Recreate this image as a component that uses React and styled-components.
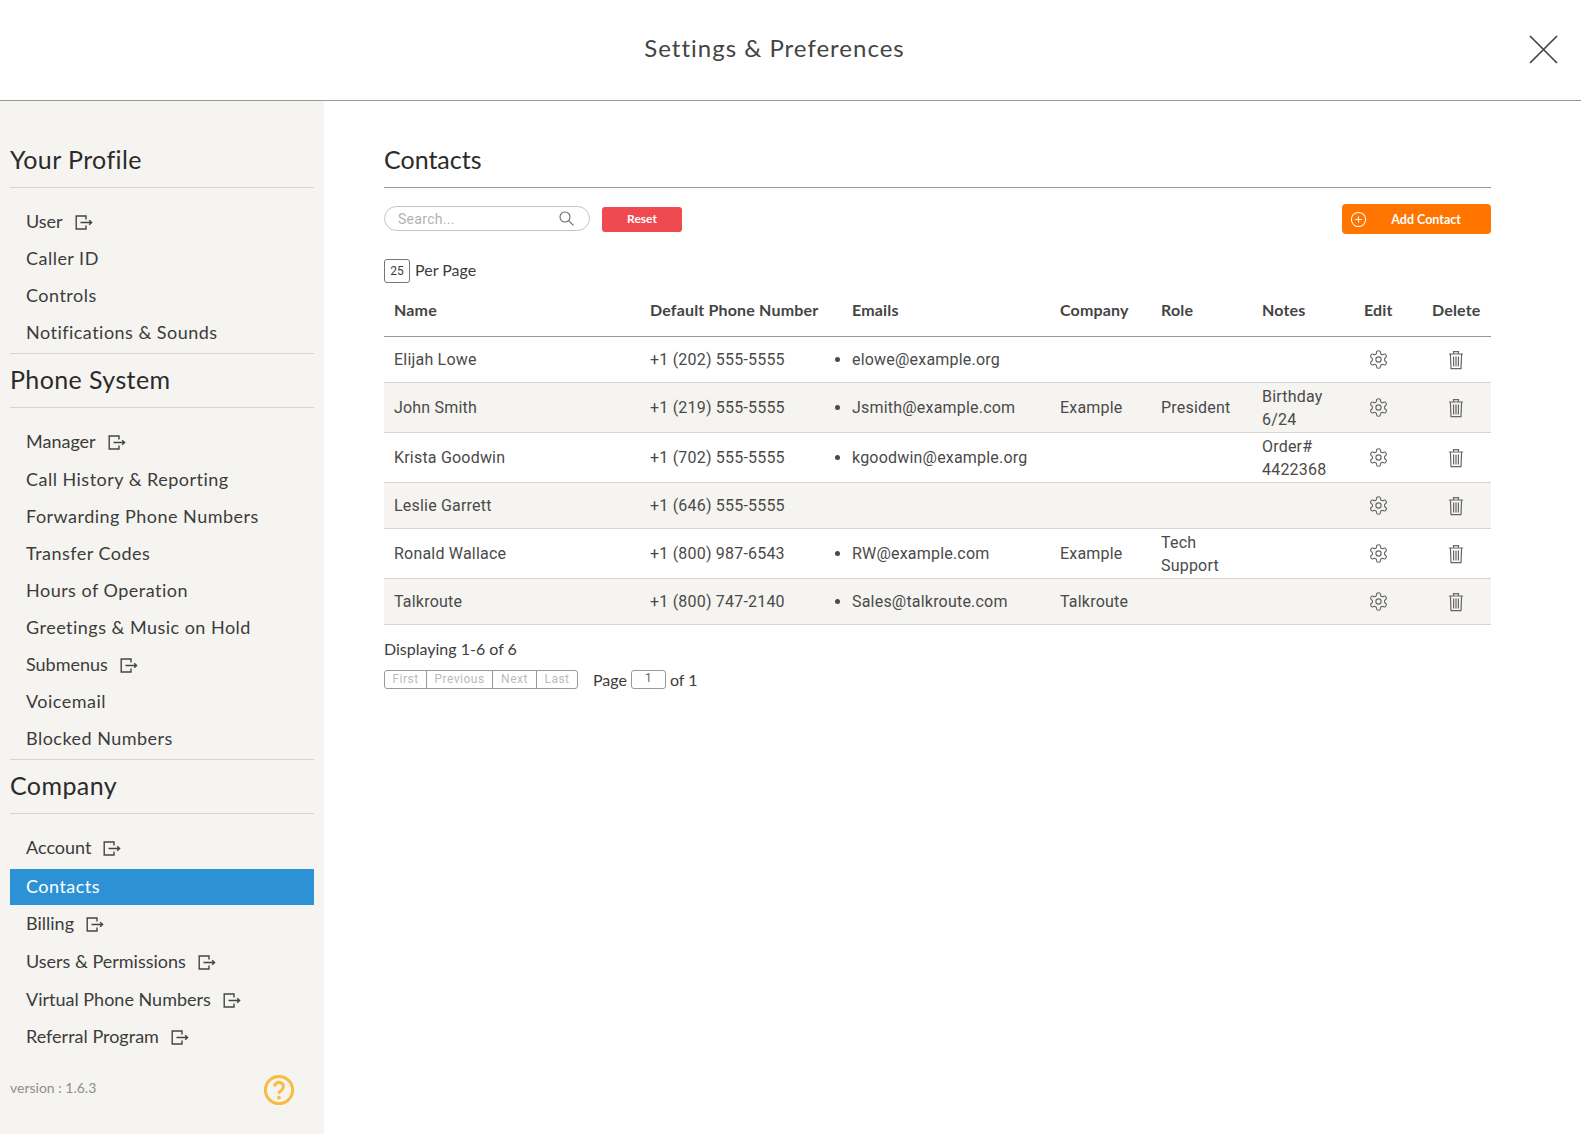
import React from 'react';
import styled, { createGlobalStyle } from 'styled-components';
import { CirclePlus } from 'lucide-react';

const GlobalStyle = createGlobalStyle`
  html, body {
    margin: 0;
    padding: 0;
    background: #fff;
  }
  * {
    box-sizing: border-box;
  }
  body {
    font-family: Lato, "Liberation Sans", sans-serif;
    color: #333;
  }
`;

const Page = styled.div`
  width: 1581px;
  height: 1134px;
  display: flex;
  flex-direction: column;
  overflow: hidden;
`;

const Header = styled.header`
  height: 101px;
  flex: none;
  display: flex;
  align-items: center;
  justify-content: center;
  position: relative;
  padding-bottom: 6px;
  border-bottom: 1px solid #999;
`;

const Title = styled.h1`
  margin: 0 0 0 -32px;
  font-size: 24px;
  font-weight: 400;
  letter-spacing: 1px;
  color: #444;
`;

const Close = styled.button`
  position: absolute;
  right: 23px;
  top: 35px;
  width: 29px;
  height: 29px;
  padding: 0;
  border: 0;
  background: none;
  color: #444;
`;

const Body = styled.div`
  flex: 1;
  display: flex;
  min-height: 0;
`;

const Sidebar = styled.aside`
  width: 324px;
  flex: none;
  padding: 41px 10px 0;
  background: #f5f4f1;
`;

const SectionTitle = styled.h2`
  margin: 0;
  height: 46px;
  padding-bottom: 11px;
  display: flex;
  align-items: center;
  font-size: 25px;
  font-weight: 400;
  letter-spacing: 0.4px;
  color: #2b2b2b;
  border-bottom: 1px solid #d6d5d2;
  & ~ & {
    margin-top: 8.5px;
  }
`;

const Nav = styled.ul`
  margin: 0;
  padding: 14px 0 2px;
  list-style: none;
  border-bottom: ${props => (props.$last ? '0' : '1px solid #d6d5d2')};
`;

const NavItem = styled.li`
  height: ${props => (props.$external ? '37.8px' : '37px')};
  padding-left: 16px;
  display: flex;
  align-items: center;
  gap: 12px;
  font-size: 18px;
  letter-spacing: ${props => (props.$external ? '0' : '0.48px')};
  color: #3c3c3c;
`;

const ActiveNavItem = styled(NavItem)`
  height: 36px;
  margin: 3px 0 -1px;
  padding-bottom: 2px;
  color: #fff;
  background: #2c92d5;
`;

const ExitSvg = styled.svg`
  margin-top: 3px;
`;

const Footer = styled.div`
  margin-top: 17px;
  padding-right: 19px;
  display: flex;
  align-items: center;
  justify-content: space-between;
  font-size: 14px;
  color: #8f8f8f;
`;

const Version = styled.span`
  margin-bottom: 5px;
`;

const HelpIcon = styled.svg`
  width: 32px;
  height: 32px;
`;

const Main = styled.main`
  flex: 1;
  padding: 41px 90px 0 60px;
`;

const PageTitle = styled.h2`
  margin: 0;
  height: 46px;
  padding-bottom: 12px;
  display: flex;
  align-items: center;
  font-size: 25px;
  font-weight: 400;
  color: #2b2b2b;
  border-bottom: 1px solid #999;
`;

const Toolbar = styled.div`
  margin-top: 16px;
  height: 30px;
  display: flex;
  align-items: center;
`;

const SearchBox = styled.div`
  width: 206px;
  height: 25px;
  margin-bottom: 1px;
  padding: 0 15px 0 13px;
  display: flex;
  align-items: center;
  justify-content: space-between;
  border: 1px solid #c4c4c4;
  border-radius: 13px;
  font-family: Roboto, sans-serif;
  font-size: 14px;
  letter-spacing: 0.3px;
  color: #b3b3b3;
`;

const ResetButton = styled.button`
  width: 80px;
  height: 25px;
  margin-left: 12px;
  padding: 0 0 2px;
  border: 0;
  border-radius: 3px;
  background: #ef4a4f;
  color: #fff;
  font-family: Lato, sans-serif;
  font-size: 12px;
  font-weight: 700;
`;

const AddButton = styled.button`
  width: 149px;
  height: 30px;
  margin-left: auto;
  padding: 0 30px 0 8px;
  display: flex;
  align-items: center;
  justify-content: space-between;
  border: 0;
  border-radius: 4px;
  background: #ff7500;
  color: #fff;
  font-family: Lato, sans-serif;
  font-size: 12.5px;
  font-weight: 700;
`;

const PerPage = styled.div`
  margin-top: 24.5px;
  display: flex;
  align-items: center;
  gap: 5px;
  font-size: 16px;
  color: #3c3c3c;
`;

const PerPageBox = styled.span`
  width: 26px;
  height: 24px;
  margin-bottom: -3px;
  display: flex;
  align-items: center;
  justify-content: center;
  border: 1px solid #777;
  border-radius: 3px;
  font-family: Roboto, sans-serif;
  font-size: 12px;
`;

const Table = styled.table`
  width: 1107px;
  table-layout: fixed;
  border-collapse: collapse;
`;

const Th = styled.th`
  height: 56.5px;
  padding: 4.5px 10px 0;
  text-align: left;
  font-size: 16px;
  font-weight: 700;
  letter-spacing: 0.17px;
  white-space: nowrap;
  color: #444;
  border-bottom: 1px solid #999;
`;

const Row = styled.tr`
  height: ${props => props.$height}px;
  background: ${props => (props.$odd ? '#f5f4f1' : '#fff')};
  border-bottom: 1px solid #d6d5d2;
`;

const Td = styled.td`
  padding: 1px 10px 0;
  font-family: Roboto, sans-serif;
  font-size: 16px;
  line-height: 23px;
  letter-spacing: 0.2px;
  color: #4a4a4a;
  white-space: ${props => (props.$wrap ? 'normal' : 'nowrap')};
`;

const EmailList = styled.ul`
  margin: 0;
  padding: 0;
  list-style: disc;
`;

const IconCell = styled.svg`
  display: block;
  color: #666;
  margin-left: ${props => props.$shift}px;
`;

const Displaying = styled.div`
  margin-top: 14px;
  font-size: 16px;
  color: #3c3c3c;
`;

const Pager = styled.div`
  margin-top: 12px;
  display: flex;
  align-items: center;
  font-size: 16px;
  color: #3c3c3c;
`;

const PagerGroup = styled.div`
  display: flex;
  height: 19px;
  margin-right: 15px;
  border: 1px solid #999;
  border-radius: 3px;
`;

const PagerButton = styled.span`
  width: ${props => props.$width}px;
  display: flex;
  align-items: center;
  justify-content: center;
  font-family: Roboto, sans-serif;
  font-size: 12px;
  letter-spacing: 0.5px;
  color: #bbb;
  & + & {
    border-left: 1px solid #999;
  }
`;

const PageInput = styled.span`
  width: 35px;
  height: 19px;
  margin: 0 4px;
  display: flex;
  justify-content: center;
  border: 1px solid #999;
  border-radius: 3px;
  font-family: Roboto, sans-serif;
  font-size: 12px;
  line-height: 14px;
  color: #666;
`;

const ExitIcon = () => (
  <ExitSvg width="18" height="15" viewBox="0 0 18 15" fill="none" stroke="#444" strokeWidth="1.4">
    <path d="M11 4.6V1H1.2v13H11v-3.6" />
    <path d="M5.5 7.5H16.6M14.2 5.2 16.6 7.5 14.2 9.8" />
  </ExitSvg>
);

const SearchIcon = () => (
  <svg width="15" height="15" viewBox="0 0 15 15" fill="none" stroke="#666" strokeWidth="1.1">
    <circle cx="6" cy="6" r="5" />
    <path d="M9.6 9.6 14.4 14.4" />
  </svg>
);

const CloseIcon = () => (
  <svg width="29" height="29" viewBox="0 0 29 29" fill="none" stroke="currentColor" strokeWidth="1.7">
    <path d="M1 1 28 28M28 1 1 28" />
  </svg>
);

const GearIcon = () => (
  <IconCell $shift={4} width="21" height="21" viewBox="0 0 24 24" fill="none" stroke="currentColor" strokeWidth="1.3" strokeLinecap="round" strokeLinejoin="round">
    <path d="M12.22 2h-.44a2 2 0 0 0-2 2v.18a2 2 0 0 1-1 1.73l-.43.25a2 2 0 0 1-2 0l-.15-.08a2 2 0 0 0-2.73.73l-.22.38a2 2 0 0 0 .73 2.73l.15.1a2 2 0 0 1 1 1.72v.51a2 2 0 0 1-1 1.74l-.15.09a2 2 0 0 0-.73 2.73l.22.38a2 2 0 0 0 2.73.73l.15-.08a2 2 0 0 1 2 0l.43.25a2 2 0 0 1 1 1.73V20a2 2 0 0 0 2 2h.44a2 2 0 0 0 2-2v-.18a2 2 0 0 1 1-1.73l.43-.25a2 2 0 0 1 2 0l.15.08a2 2 0 0 0 2.73-.73l.22-.39a2 2 0 0 0-.73-2.73l-.15-.08a2 2 0 0 1-1-1.74v-.5a2 2 0 0 1 1-1.74l.15-.09a2 2 0 0 0 .73-2.73l-.22-.38a2 2 0 0 0-2.73-.73l-.15.08a2 2 0 0 1-2 0l-.43-.25a2 2 0 0 1-1-1.73V4a2 2 0 0 0-2-2z" />
    <circle cx="12" cy="12" r="3" />
  </IconCell>
);

const TrashIcon = () => (
  <IconCell $shift={16} width="16" height="20" viewBox="0 0 16 20" fill="none" stroke="currentColor" strokeWidth="1.2">
    <path d="M1 4H15M5.5 4V1.6h5V4" />
    <path d="M2.4 4 3 18.6h10L13.6 4" />
    <path d="M5.6 6.6V16.4M8 6.6V16.4M10.4 6.6V16.4" />
  </IconCell>
);

const navSections = [
  {
    title: 'Your Profile',
    items: [
      { label: 'User', external: true },
      { label: 'Caller ID' },
      { label: 'Controls' },
      { label: 'Notifications & Sounds' },
    ],
  },
  {
    title: 'Phone System',
    items: [
      { label: 'Manager', external: true },
      { label: 'Call History & Reporting' },
      { label: 'Forwarding Phone Numbers' },
      { label: 'Transfer Codes' },
      { label: 'Hours of Operation' },
      { label: 'Greetings & Music on Hold' },
      { label: 'Submenus', external: true },
      { label: 'Voicemail' },
      { label: 'Blocked Numbers' },
    ],
  },
  {
    title: 'Company',
    last: true,
    items: [
      { label: 'Account', external: true },
      { label: 'Contacts', active: true },
      { label: 'Billing', external: true },
      { label: 'Users & Permissions', external: true },
      { label: 'Virtual Phone Numbers', external: true },
      { label: 'Referral Program', external: true },
    ],
  },
];

const columns = [
  { label: 'Name', width: 256 },
  { label: 'Default Phone Number', width: 202 },
  { label: 'Emails', width: 208 },
  { label: 'Company', width: 101 },
  { label: 'Role', width: 101 },
  { label: 'Notes', width: 102 },
  { label: 'Edit', width: 68 },
  { label: 'Delete', width: 69 },
];

const contacts = [
  { name: 'Elijah Lowe', phone: '+1 (202) 555-5555', email: 'elowe@example.org', height: 46 },
  { name: 'John Smith', phone: '+1 (219) 555-5555', email: 'Jsmith@example.com', company: 'Example', role: 'President', notes: 'Birthday 6/24', height: 50 },
  { name: 'Krista Goodwin', phone: '+1 (702) 555-5555', email: 'kgoodwin@example.org', notes: 'Order# 4422368', height: 50 },
  { name: 'Leslie Garrett', phone: '+1 (646) 555-5555', height: 46 },
  { name: 'Ronald Wallace', phone: '+1 (800) 987-6543', email: 'RW@example.com', company: 'Example', role: 'Tech Support', height: 50 },
  { name: 'Talkroute', phone: '+1 (800) 747-2140', email: 'Sales@talkroute.com', company: 'Talkroute', height: 46 },
];

export default function App() {
  return (
    <Page>
      <GlobalStyle />
      <Header>
        <Title>Settings &amp; Preferences</Title>
        <Close aria-label="Close">
          <CloseIcon />
        </Close>
      </Header>
      <Body>
        <Sidebar>
          {navSections.map(section => (
            <React.Fragment key={section.title}>
              <SectionTitle>{section.title}</SectionTitle>
              <Nav $last={section.last}>
                {section.items.map(item => {
                  const Item = item.active ? ActiveNavItem : NavItem;
                  return (
                    <Item key={item.label} $external={item.external}>
                      {item.label}
                      {item.external && <ExitIcon />}
                    </Item>
                  );
                })}
              </Nav>
            </React.Fragment>
          ))}
          <Footer>
            <Version>version : 1.6.3</Version>
            <HelpIcon viewBox="0 0 32 32" fill="none">
              <circle cx="16" cy="16" r="13.6" stroke="#f7bd42" strokeWidth="3" />
              <path d="M11.6 12.6a4.4 4.4 0 1 1 6.7 3.8c-1.5.9-2.3 1.7-2.3 3.4" stroke="#f7bd42" strokeWidth="3" />
              <circle cx="16" cy="23.6" r="1.9" fill="#f7bd42" />
            </HelpIcon>
          </Footer>
        </Sidebar>
        <Main>
          <PageTitle>Contacts</PageTitle>
          <Toolbar>
            <SearchBox>
              Search...
              <SearchIcon />
            </SearchBox>
            <ResetButton>Reset</ResetButton>
            <AddButton>
              <CirclePlus size={17} strokeWidth={1.5} />
              Add Contact
            </AddButton>
          </Toolbar>
          <PerPage>
            <PerPageBox>25</PerPageBox>
            Per Page
          </PerPage>
          <Table>
            <colgroup>
              {columns.map(col => (
                <col key={col.label} width={col.width} />
              ))}
            </colgroup>
            <thead>
              <tr>
                {columns.map(col => (
                  <Th key={col.label}>{col.label}</Th>
                ))}
              </tr>
            </thead>
            <tbody>
              {contacts.map((contact, i) => (
                <Row key={contact.name} $odd={i % 2 === 1} $height={contact.height}>
                  <Td>{contact.name}</Td>
                  <Td>{contact.phone}</Td>
                  <Td>
                    {contact.email && (
                      <EmailList>
                        <li>{contact.email}</li>
                      </EmailList>
                    )}
                  </Td>
                  <Td>{contact.company}</Td>
                  <Td $wrap>{contact.role}</Td>
                  <Td $wrap>{contact.notes}</Td>
                  <Td><GearIcon /></Td>
                  <Td><TrashIcon /></Td>
                </Row>
              ))}
            </tbody>
          </Table>
          <Displaying>Displaying 1-6 of 6</Displaying>
          <Pager>
            <PagerGroup>
              <PagerButton $width={41}>First</PagerButton>
              <PagerButton $width={66}>Previous</PagerButton>
              <PagerButton $width={44}>Next</PagerButton>
              <PagerButton $width={41}>Last</PagerButton>
            </PagerGroup>
            Page
            <PageInput>1</PageInput>
            of 1
          </Pager>
        </Main>
      </Body>
    </Page>
  );
}
